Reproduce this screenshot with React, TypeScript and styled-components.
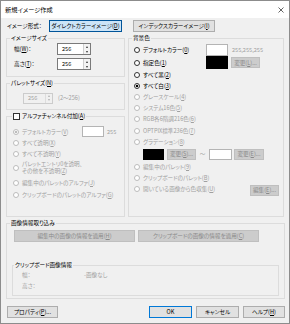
import React from "react";
import styled, { createGlobalStyle } from "styled-components";

const Global = createGlobalStyle`
  html, body { margin: 0; padding: 0; background: #ffffff; }
  body {
    font-family: "Noto Sans CJK JP", "Noto Sans", sans-serif;
    font-size: 5.6px;
    font-feature-settings: "palt";
    color: #000;
  }
  * { box-sizing: border-box; }
`;

type Kind = "normal" | "pressed" | "default" | "disabled";
const BORDER: Record<Kind, string> = { normal: "#adadad", pressed: "#005499", default: "#0078d7", disabled: "#bfbfbf" };
const BG: Record<Kind, string> = { normal: "#e1e1e1", pressed: "#cce4f7", default: "#e1e1e1", disabled: "#cccccc" };

const Window = styled.div`
  width: 290px;
  height: 324px;
  border: 1px solid #8c8c8c;
  background: #f0f0f0;
  display: flex;
  flex-direction: column;
`;

const TitleBar = styled.div`
  height: 17px;
  flex: none;
  background: #ffffff;
  display: flex;
  align-items: center;
  justify-content: space-between;
  padding: 0 5px 0 4px;
  font-size: 6.2px;
  line-height: 8px;
`;

const Body = styled.div`
  flex: 1;
  display: flex;
  flex-direction: column;
  padding: 2px 4px 0 5px;
`;

const FormatRow = styled.div`
  display: flex;
  align-items: center;
  height: 12px;
`;

const FormatLabel = styled.span`
  width: 43px;
  padding-left: 1px;
  line-height: 8px;
`;

const Button = styled.div<{ $w: number; $h?: number; $kind?: Kind; $ml?: number }>`
  width: ${(p) => p.$w}px;
  height: ${(p) => p.$h ?? 12}px;
  margin-left: ${(p) => p.$ml ?? 0}px;
  flex: none;
  display: flex;
  align-items: center;
  justify-content: center;
  white-space: nowrap;
  line-height: 8px;
  border: 1px solid ${(p) => BORDER[p.$kind ?? "normal"]};
  background: ${(p) => BG[p.$kind ?? "normal"]};
  color: ${(p) => (p.$kind === "disabled" ? "#8a8a8a" : "#000")};
`;

const Columns = styled.div`
  margin-top: 6px;
  display: grid;
  grid-template-columns: 119px 156px;
  column-gap: 3px;
  height: 179px;
`;

const LeftCol = styled.div`
  display: flex;
  flex-direction: column;
`;

const Group = styled.div<{ $grow?: boolean; $mt?: number; $pl?: number; $pb?: number; $pr?: number }>`
  border: 1px solid #dcdcdc;
  margin-top: ${(p) => p.$mt ?? 0}px;
  padding: 0 ${(p) => p.$pr ?? 0}px ${(p) => p.$pb ?? 0}px ${(p) => p.$pl ?? 0}px;
  flex: ${(p) => (p.$grow ? "1" : "none")};
  display: flex;
  flex-direction: column;
`;

const GroupTitle = styled.div<{ $ml?: number }>`
  margin: -5px 0 0 ${(p) => p.$ml ?? 3}px;
  padding: 0 1px;
  height: 8px;
  line-height: 8px;
  width: fit-content;
  background: #f0f0f0;
  white-space: nowrap;
  display: flex;
  align-items: center;
`;

const FieldRow = styled.div<{ $mt?: number }>`
  display: flex;
  align-items: center;
  height: 12px;
  margin-top: ${(p) => p.$mt ?? 0}px;
`;

const FieldLabel = styled.span`
  width: 43px;
  line-height: 8px;
`;

const SpinBox = styled.div<{ $w: number; $h?: number; $off?: boolean }>`
  width: ${(p) => p.$w}px;
  height: ${(p) => p.$h ?? 12}px;
  border: 1px solid ${(p) => (p.$off ? "#cccccc" : "#7a7a7a")};
  background: ${(p) => (p.$off ? "#f0f0f0" : "#ffffff")};
  color: ${(p) => (p.$off ? "#a0a0a0" : "#000")};
  display: flex;
  flex: none;
`;

const SpinValue = styled.span`
  flex: 1;
  padding-left: 4px;
  line-height: 8px;
  display: flex;
  align-items: center;
`;

const SpinArrows = styled.div<{ $off?: boolean }>`
  width: 7px;
  display: flex;
  flex-direction: column;
  border-left: 1px solid ${(p) => (p.$off ? "#dddddd" : "#cfcfcf")};
  background: ${(p) => (p.$off ? "#f0f0f0" : "#f3f3f3")};
`;

const ArrowCell = styled.div<{ $off?: boolean; $down?: boolean }>`
  flex: 1;
  display: flex;
  align-items: center;
  justify-content: center;
  &::after {
    content: "";
    border-left: 1.5px solid transparent;
    border-right: 1.5px solid transparent;
    ${(p) => (p.$down ? "border-top" : "border-bottom")}: 2px solid ${(p) => (p.$off ? "#b0b0b0" : "#333")};
  }
`;

const Hint = styled.span<{ $ml?: number }>`
  color: #a0a0a0;
  margin-left: ${(p) => p.$ml ?? 0}px;
  line-height: 8px;
  white-space: nowrap;
`;

const Choice = styled.div<{ $h?: number; $pl?: number; $mt?: number }>`
  display: flex;
  align-items: center;
  height: ${(p) => p.$h ?? 11}px;
  padding-left: ${(p) => p.$pl ?? 0}px;
  margin-top: ${(p) => p.$mt ?? 0}px;
`;

const ChoiceCell = styled.div<{ $w?: number }>`
  display: flex;
  align-items: center;
  width: ${(p) => (p.$w ? `${p.$w}px` : "auto")};
  flex: none;
`;

const Radio = styled.span<{ $on?: boolean; $off?: boolean }>`
  width: 6px;
  height: 6px;
  flex: none;
  border-radius: 50%;
  border: 1px solid ${(p) => (p.$off ? "#bcbcbc" : "#333333")};
  background: ${(p) =>
    p.$on
      ? `radial-gradient(circle, ${p.$off ? "#bcbcbc" : "#000"} 0 1.4px, #ffffff 1.6px)`
      : "#ffffff"};
`;

const ChoiceText = styled.span<{ $off?: boolean; $lh?: number }>`
  margin-left: 3px;
  color: ${(p) => (p.$off ? "#a0a0a0" : "#000")};
  line-height: ${(p) => p.$lh ?? 8}px;
  white-space: nowrap;
`;

const Check = styled.span`
  width: 7px;
  height: 7px;
  border: 1px solid #333333;
  background: #ffffff;
  flex: none;
  margin-right: 2px;
`;

const Swatch = styled.div<{ $c: string; $w: number; $h: number; $ml?: number }>`
  width: ${(p) => p.$w}px;
  height: ${(p) => p.$h}px;
  margin-left: ${(p) => p.$ml ?? 0}px;
  flex: none;
  background: ${(p) => p.$c};
  border: 1px solid ${(p) => (p.$c === "#000000" ? "#000000" : "#b4b4b4")};
`;

const Tilde = styled.span`
  width: 13px;
  text-align: center;
  color: #a0a0a0;
  line-height: 8px;
`;

const ButtonRow = styled.div`
  display: flex;
  gap: 3px;
  margin: 3px 0 0 1px;
`;

const InfoGroup = styled(Group)`
  margin: 23px 5px 0 -1px;
`;

const InfoRow = styled.div`
  display: flex;
  align-items: center;
  height: 11px;
  padding-left: 9px;
  color: #a0a0a0;
  line-height: 8px;
`;

const InfoLabel = styled.span`
  width: 62px;
`;

const Footer = styled.div`
  display: flex;
  align-items: center;
  margin-top: 7px;
  padding-left: 1px;
`;

const FooterRight = styled.div`
  margin-left: auto;
  display: flex;
  gap: 4px;
`;

const Key = styled.span`
  text-decoration: underline;
  text-decoration-thickness: 0.5px;
  text-underline-offset: 0.5px;
`;

const M = ({ t, k, post = "" }: { t: string; k: string; post?: string }) => (
  <>
    {t}(<Key>{k}</Key>){post}
  </>
);

const CloseIcon = () => (
  <svg width="6" height="6" viewBox="0 0 6 6">
    <path d="M0.5 0.5 L5.5 5.5 M5.5 0.5 L0.5 5.5" stroke="#222" strokeWidth="0.7" />
  </svg>
);

const Spin = ({ v, w, h, off }: { v: string; w: number; h?: number; off?: boolean }) => (
  <SpinBox $w={w} $h={h} $off={off}>
    <SpinValue>{v}</SpinValue>
    <SpinArrows $off={off}>
      <ArrowCell $off={off} />
      <ArrowCell $off={off} $down />
    </SpinArrows>
  </SpinBox>
);

export default function App() {
  return (
    <>
      <Global />
      <Window>
        <TitleBar>
          <span>新規イメージ作成</span>
          <CloseIcon />
        </TitleBar>
        <Body>
          <FormatRow>
            <FormatLabel>イメージ形式：</FormatLabel>
            <Button $w={73} $kind="pressed">
              <M t="ダイレクトカラーイメージ" k="D" />
            </Button>
            <Button $w={82} $ml={11}>
              <M t="インデックスカラーイメージ" k="I" />
            </Button>
          </FormatRow>

          <Columns>
            <LeftCol>
              <Group $pl={7} $pb={6}>
                <GroupTitle $ml={-4}>イメージサイズ</GroupTitle>
                <FieldRow $mt={1}>
                  <FieldLabel>
                    <M t="幅" k="W" post="：" />
                  </FieldLabel>
                  <Spin v="256" w={34} />
                </FieldRow>
                <FieldRow $mt={3}>
                  <FieldLabel>
                    <M t="高さ" k="T" post="：" />
                  </FieldLabel>
                  <Spin v="256" w={34} />
                </FieldRow>
              </Group>

              <Group $mt={6} $pl={16} $pb={5}>
                <GroupTitle $ml={-13}>
                  <M t="パレットサイズ" k="N" />
                </GroupTitle>
                <FieldRow $mt={5}>
                  <Spin v="256" w={30} h={11} off />
                  <Hint $ml={5}>(2～256)</Hint>
                </FieldRow>
              </Group>

              <Group $mt={6} $grow $pl={6}>
                <GroupTitle $ml={-1}>
                  <Check />
                  <M t="アルファチャンネル付加" k="A" />
                </GroupTitle>
                <Choice $mt={6}>
                  <ChoiceCell $w={69}>
                    <Radio $on $off />
                    <ChoiceText $off>
                      <M t="デフォルトカラー" k="V" />
                    </ChoiceText>
                  </ChoiceCell>
                  <Swatch $c="#ffffff" $w={22} $h={11} />
                  <Hint $ml={3}>255</Hint>
                </Choice>
                <Choice>
                  <Radio $off />
                  <ChoiceText $off>
                    <M t="すべて透明" k="X" />
                  </ChoiceText>
                </Choice>
                <Choice>
                  <Radio $off />
                  <ChoiceText $off>
                    <M t="すべて不透明" k="Y" />
                  </ChoiceText>
                </Choice>
                <Choice $h={18}>
                  <Radio $off />
                  <ChoiceText $off $lh={7}>
                    パレットエントリ0を透明、
                    <br />
                    <M t="その他を不透明" k="Z" />
                  </ChoiceText>
                </Choice>
                <Choice $h={12}>
                  <Radio $off />
                  <ChoiceText $off>
                    <M t="編集中のパレットのアルファ" k="J" />
                  </ChoiceText>
                </Choice>
                <Choice>
                  <Radio $off />
                  <ChoiceText $off>
                    <M t="クリップボードのパレットのアルファ" k="G" />
                  </ChoiceText>
                </Choice>
              </Group>
            </LeftCol>

            <Group $pl={5} $pr={4}>
              <GroupTitle $ml={-2}>背景色</GroupTitle>
              <Choice $h={13} $mt={1}>
                <ChoiceCell $w={72}>
                  <Radio />
                  <ChoiceText>
                    <M t="デフォルトカラー" k="0" />
                  </ChoiceText>
                </ChoiceCell>
                <Swatch $c="#ffffff" $w={22} $h={12} />
                <Hint $ml={4}>255,255,255</Hint>
              </Choice>
              <Choice $h={13}>
                <ChoiceCell $w={72}>
                  <Radio />
                  <ChoiceText>
                    <M t="指定色" k="1" />
                  </ChoiceText>
                </ChoiceCell>
                <Swatch $c="#000000" $w={22} $h={13} />
                <Button $w={29} $h={11} $ml={3} $kind="disabled">
                  <M t="変更" k="L" post="..." />
                </Button>
              </Choice>
              <Choice $h={11.2}>
                <Radio />
                <ChoiceText>
                  <M t="すべて黒" k="2" />
                </ChoiceText>
              </Choice>
              <Choice $h={11.2}>
                <Radio $on />
                <ChoiceText>
                  <M t="すべて白" k="3" />
                </ChoiceText>
              </Choice>
              <Choice $h={11.2}>
                <Radio $off />
                <ChoiceText $off>
                  <M t="グレースケール" k="4" />
                </ChoiceText>
              </Choice>
              <Choice $h={11.2}>
                <Radio $off />
                <ChoiceText $off>
                  <M t="システム16色" k="5" />
                </ChoiceText>
              </Choice>
              <Choice $h={11.2}>
                <Radio $off />
                <ChoiceText $off>
                  <M t="RGB各6階調216色" k="6" />
                </ChoiceText>
              </Choice>
              <Choice $h={11.2}>
                <Radio $off />
                <ChoiceText $off>
                  <M t="OPTPIX標準236色" k="7" />
                </ChoiceText>
              </Choice>
              <Choice $h={11.2}>
                <Radio $off />
                <ChoiceText $off>
                  <M t="グラデーション" k="8" />
                </ChoiceText>
              </Choice>
              <Choice $h={14} $pl={9}>
                <Swatch $c="#000000" $w={21} $h={11} />
                <Button $w={29} $h={11} $ml={3} $kind="disabled">
                  <M t="変更" k="S" post="..." />
                </Button>
                <Tilde>～</Tilde>
                <Swatch $c="#ffffff" $w={23} $h={11} />
                <Button $w={30} $h={11} $ml={2} $kind="disabled">
                  <M t="変更" k="E" post="..." />
                </Button>
              </Choice>
              <Choice $h={11.2}>
                <Radio $off />
                <ChoiceText $off>
                  <M t="編集中のパレット" k="9" />
                </ChoiceText>
              </Choice>
              <Choice $h={11.2}>
                <Radio $off />
                <ChoiceText $off>
                  <M t="クリップボードのパレット" k="B" />
                </ChoiceText>
              </Choice>
              <Choice $h={11.2}>
                <Radio $off />
                <ChoiceText $off>
                  <M t="開いている画像から色収集" k="U" />
                </ChoiceText>
                <Button $w={29} $h={11} $kind="disabled" style={{ marginLeft: "auto", marginTop: 2 }}>
                  <M t="編集" k="E" post="..." />
                </Button>
              </Choice>
            </Group>
          </Columns>

          <Group $mt={6} $pl={6} $pb={2}>
            <GroupTitle $ml={-3}>画像情報取り込み</GroupTitle>
            <ButtonRow>
              <Button $w={121} $kind="disabled">
                <M t="編集中の画像の情報を適用" k="H" />
              </Button>
              <Button $w={121} $kind="disabled">
                <M t="クリップボードの画像の情報を適用" k="C" />
              </Button>
            </ButtonRow>
            <InfoGroup $pb={4}>
              <GroupTitle $ml={1}>クリップボード画像情報</GroupTitle>
              <InfoRow>
                <InfoLabel>幅：</InfoLabel>
                <span>-画像なし</span>
              </InfoRow>
              <InfoRow>
                <InfoLabel>高さ：</InfoLabel>
              </InfoRow>
            </InfoGroup>
          </Group>

          <Footer>
            <Button $w={51}>
              <M t="プロパティ" k="P" post="..." />
            </Button>
            <FooterRight>
              <Button $w={43} $kind="default">OK</Button>
              <Button $w={43}>キャンセル</Button>
              <Button $w={42}>
                <M t="ヘルプ" k="H" />
              </Button>
            </FooterRight>
          </Footer>
        </Body>
      </Window>
    </>
  );
}
